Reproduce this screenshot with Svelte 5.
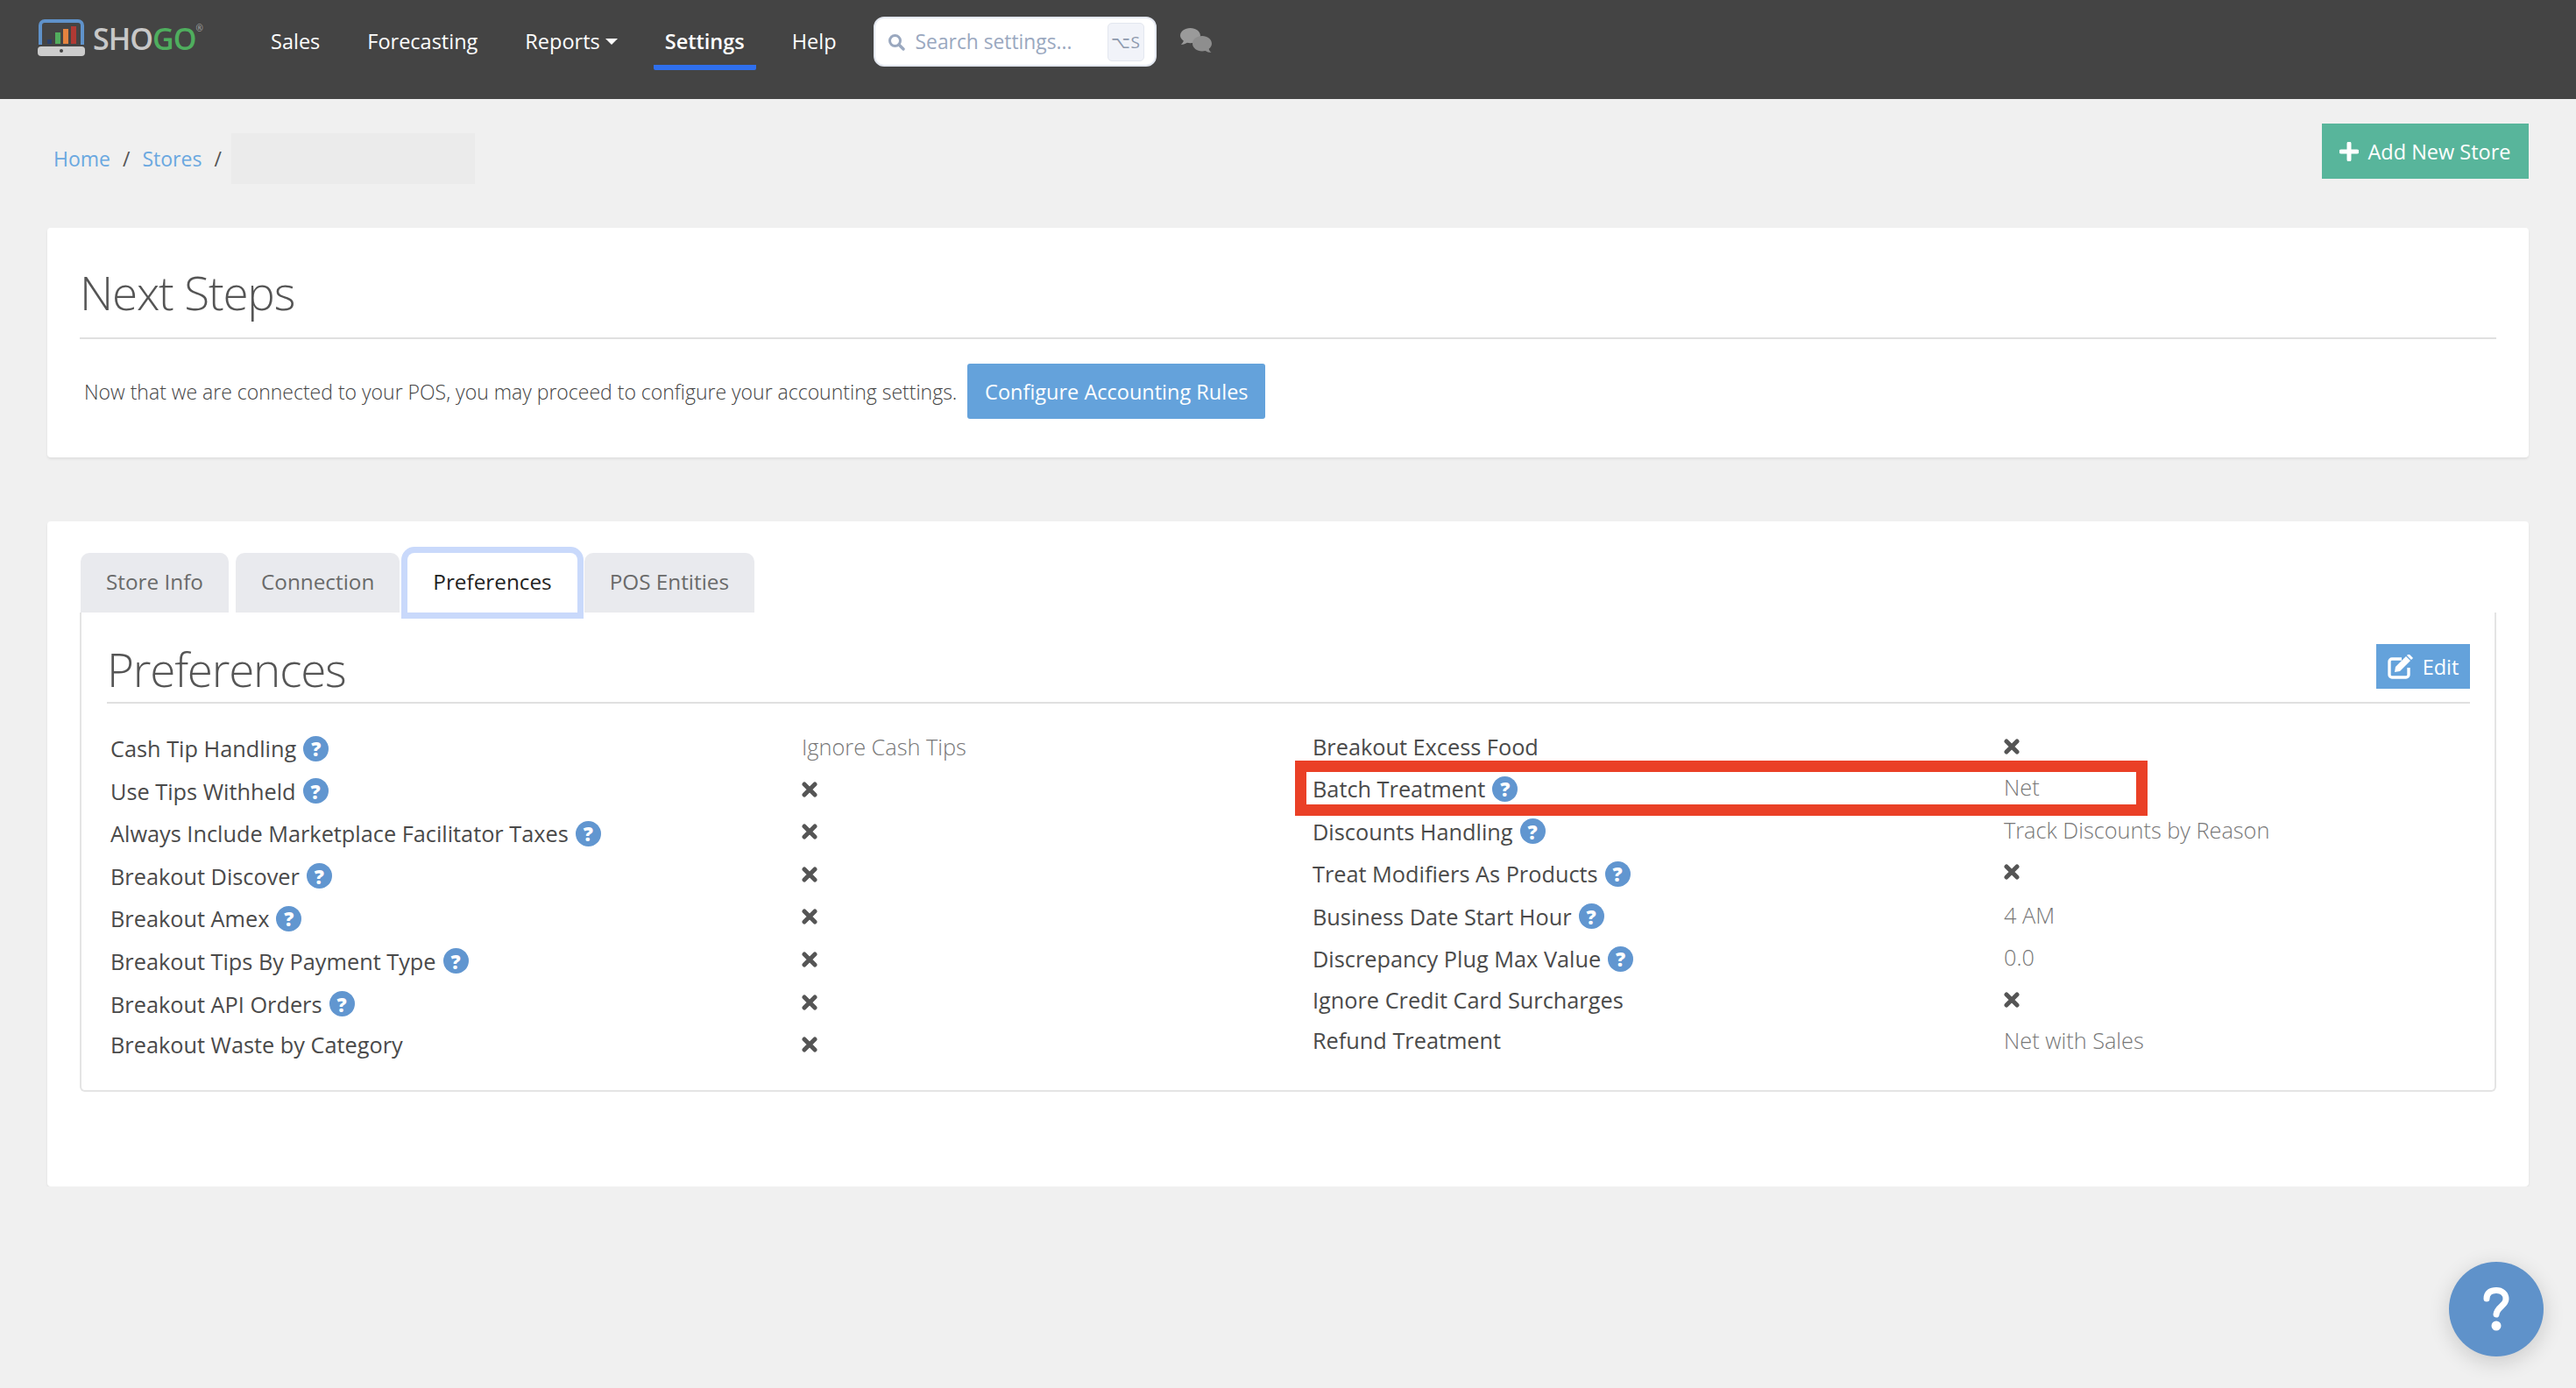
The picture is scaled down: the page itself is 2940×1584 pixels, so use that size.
<script>
  const nav = ['Sales', 'Forecasting', 'Reports', 'Settings', 'Help'];
  const tabs = ['Store Info', 'Connection', 'Preferences', 'POS Entities'];
  const left = [
    { l: 'Cash Tip Handling', h: true, v: 'Ignore Cash Tips' },
    { l: 'Use Tips Withheld', h: true },
    { l: 'Always Include Marketplace Facilitator Taxes', h: true },
    { l: 'Breakout Discover', h: true },
    { l: 'Breakout Amex', h: true },
    { l: 'Breakout Tips By Payment Type', h: true },
    { l: 'Breakout API Orders', h: true },
    { l: 'Breakout Waste by Category' }
  ];
  const right = [
    { l: 'Breakout Excess Food' },
    { l: 'Batch Treatment', h: true, v: 'Net', mark: true },
    { l: 'Discounts Handling', h: true, v: 'Track Discounts by Reason' },
    { l: 'Treat Modifiers As Products', h: true },
    { l: 'Business Date Start Hour', h: true, v: '4 AM' },
    { l: 'Discrepancy Plug Max Value', h: true, v: '0.0' },
    { l: 'Ignore Credit Card Surcharges' },
    { l: 'Refund Treatment', v: 'Net with Sales' }
  ];
  const cols = [left, right];
</script>

<header class="nav">
  <div class="brand">
    <svg class="logo" viewBox="0 0 54 42" width="54" height="42">
      <path d="M3 29V7a5 5 0 0 1 5-5h38a5 5 0 0 1 5 5v22" fill="none" stroke="#5f92ca" stroke-width="4"/>
      <rect x="11" y="23" width="5" height="5" fill="#2a3f6b"/>
      <rect x="20" y="15" width="6" height="13" fill="#52ad5e"/>
      <rect x="29" y="11" width="6" height="17" fill="#e5833f"/>
      <rect x="38" y="8" width="6" height="20" fill="#b03a34"/>
      <rect x="0" y="31" width="54" height="11" rx="4" fill="#cccccc"/>
      <circle cx="27" cy="36" r="2" fill="#444"/>
    </svg>
    <span class="word">SHO<b>GO</b></span><span class="reg">®</span>
  </div>
  <nav class="links">
    {#each nav as n}
      <span class="link" class:active={n === 'Settings'}>{n}{#if n === 'Reports'}<i class="caret"></i>{/if}</span>
    {/each}
  </nav>
  <div class="search">
    <svg viewBox="0 0 20 20" width="20" height="20"><circle cx="8.500" cy="8.500" r="6" fill="none" stroke="#9aa8bf" stroke-width="3"/><path d="M13 13l5 5" stroke="#9aa8bf" stroke-width="3.400" stroke-linecap="round"/></svg>
    <span class="ph">Search settings...</span>
    <span class="kbd">⌥S</span>
  </div>
  <svg class="chat" viewBox="0 0 36 28" width="36" height="28">
    <path d="M14 0c7.700 0 14 4.700 14 10.500S21.700 21 14 21c-1.500 0-3-.2-4.300-.5C7.500 22 4.500 23 1 23c2-1.500 3.200-3.400 3.600-5.300C1.800 15.800 0 13.300 0 10.500 0 4.700 6.300 0 14 0z" fill="#9a9a9a" transform="scale(.82)"/>
    <path d="M25 9c6 0 11 3.900 11 8.700 0 2.400-1.200 4.500-3.300 6.100.3 1.500 1.200 3 2.800 4.200-2.700 0-5-.8-6.800-2-1.200.3-2.400.4-3.700.4-6 0-11-3.900-11-8.700S19 9 25 9z" fill="#8e8e8e"/>
  </svg>
</header>

<main class="page">
  <div class="crumbs">
    <div class="trail">
      <a href="#home">Home</a><span class="sep">/</span><a href="#stores">Stores</a><span class="sep last">/</span><span class="blank"></span>
    </div>
    <button class="btn add"><svg viewBox="0 0 22 22" width="22" height="22"><path d="M11 2v18M2 11h18" stroke="#fff" stroke-width="5" stroke-linecap="round"/></svg>Add New Store</button>
  </div>

  <section class="card first">
    <h2>Next Steps</h2>
    <div class="next">
      <span>Now that we are connected to your POS, you may proceed to configure your accounting settings.</span>
      <button class="btn cfg">Configure Accounting Rules</button>
    </div>
  </section>

  <section class="card second">
    <div class="tabs">
      {#each tabs as t}
        <div class="tab" class:on={t === 'Preferences'}>{t}</div>
      {/each}
    </div>
    <div class="panel">
      <div class="head">
        <h2>Preferences</h2>
        <button class="btn edit">
          <svg viewBox="0 0 30 28" width="30" height="28">
            <path d="M24 15v8a3 3 0 0 1-3 3H5a3 3 0 0 1-3-3V8a3 3 0 0 1 3-3h11" fill="none" stroke="#fff" stroke-width="3.400"/>
            <path d="M8 20l1-6L21 2l5 5-12 12z" fill="#fff"/>
            <path d="M23 0l5 5" stroke="#fff" stroke-width="3"/>
          </svg>Edit</button>
      </div>
      <div class="cols">
        {#each cols as col}
          <div class="col">
            {#each col as r}
              <div class="row" class:tall={r.h}>
                <div class="label">{r.l}{#if r.h}<span class="q">?</span>{/if}</div>
                <div class="val">
                  {#if r.v}{r.v}{:else}<svg viewBox="0 0 18 18" width="18" height="18"><path d="M3 3l12 12M15 3L3 15" stroke="#555" stroke-width="5" stroke-linecap="round"/></svg>{/if}
                </div>
                {#if r.mark}<span class="redbox"></span>{/if}
              </div>
            {/each}
          </div>
        {/each}
      </div>
    </div>
  </section>
</main>

<button class="fab" aria-label="Help">
  <svg viewBox="0 0 30 50" width="30" height="50">
    <path d="M4 13C4 6 9 3.500 15 3.500S26 7 26 13.500C26 21 16 22 15 31" fill="none" stroke="#fff" stroke-width="7" stroke-linecap="round"/>
    <circle cx="15" cy="44" r="5.500" fill="#fff"/>
  </svg>
</button>

<style>
  :global(body) {
    margin: 0;
    background: #f0f0f0;
    font-family: "Open Sans", "Liberation Sans", sans-serif;
    font-size: 25.300px;
    color: #555;
  }
  .nav {
    height: 113px;
    background: #444;
    display: flex;
    align-items: flex-start;
    box-sizing: border-box;
    padding-left: 43px;
  }
  .brand {
    display: flex;
    align-items: flex-start;
    width: 253px;
    padding-top: 22px;
    flex: none;
  }
  .word {
    font-size: 34px;
    line-height: 42px;
    margin-left: 9px;
    letter-spacing: -1px;
    color: #c8c8c8;
    font-weight: 600;
    margin-top: 1px;
  }
  .word b { color: #4fae5e; font-weight: 600; }
  .reg { font-size: 10px; color: #aaa; line-height: 12px; margin-top: 4px; }
  .links { display: flex; gap: 28px; flex: none; }
  .link {
    color: #fff;
    font-size: 23.500px;
    line-height: 34px;
    padding: 30px 13px 10px;
    border-bottom: 6px solid transparent;
    display: block;
    box-sizing: border-box;
    height: 80px;
    white-space: nowrap;
  }
  .link.active { font-weight: 600; border-bottom-color: #2f6fed; border-radius: 0 0 2px 2px; }
  .caret {
    display: inline-block;
    margin-left: 6px;
    vertical-align: 5px;
    border-top: 7px solid #fff;
    border-left: 7px solid transparent;
    border-right: 7px solid transparent;
  }
  .search {
    margin: 19px 0 0 29px;
    width: 323px;
    height: 57px;
    box-sizing: border-box;
    background: #fff;
    border: 2px solid #e4e8f0;
    border-radius: 12px;
    display: flex;
    align-items: center;
    padding: 0 12px 0 14px;
    flex: none;
  }
  .ph { color: #9aa8bf; font-size: 22.800px; margin-left: 12px; flex: 1; white-space: nowrap; }
  .kbd {
    width: 42px;
    height: 44px;
    box-sizing: border-box;
    background: #f1f3f9;
    border: 1px solid #e3e7ef;
    border-radius: 5px;
    color: #8d99ad;
    font-size: 19px;
    display: flex;
    align-items: center;
    justify-content: center;
  }
  .chat { margin: 32px 0 0 27px; flex: none; }
  .page { padding: 0 54px; }
  .crumbs {
    height: 147px;
    display: flex;
    justify-content: space-between;
    align-items: flex-start;
  }
  .trail { display: flex; align-items: center; padding: 39px 0 0 7px; height: 58px; }
  .trail a { color: #6aa8e0; text-decoration: none; font-size: 23px; }
  .sep { margin: 0 14px; color: #555; font-size: 23px; }
  .sep.last { margin-right: 11px; }
  .blank { width: 278px; height: 58px; background: #ebebeb; display: block; }
  .btn {
    border: 0;
    color: #fff;
    font-family: inherit;
    font-size: 23.500px;
    display: flex;
    align-items: center;
    justify-content: center;
    background: #64a2db;
    padding: 0;
  }
  .add { margin-top: 28px; width: 236px; height: 63px; background: #58b59b; gap: 10px; }
  .card {
    background: #fff;
    border-radius: 4px;
    box-shadow: 0 2px 3px rgba(0, 0, 0, 0.07);
  }
  .first { height: 262px; box-sizing: border-box; padding: 0 37px; }
  h2 {
    margin: 0;
    font-weight: 300;
    font-size: 53px;
    color: #555;
    letter-spacing: -1.200px;
  }
  .first h2 {
    height: 125px;
    line-height: 148px;
    border-bottom: 2px solid #e0e0e0;
    box-sizing: content-box;
  }
  .next { display: flex; align-items: flex-start; padding: 28px 0 0 5px; font-size: 23px; }
  .next span { margin-top: 15px; line-height: 34px; font-weight: 300; color: #444; white-space: nowrap; }
  .cfg { width: 340px; height: 63px; margin-left: 12px; border-radius: 3px; }
  .second { margin-top: 73px; height: 759px; box-sizing: border-box; padding: 36px 37px 0; }
  .tabs { display: flex; height: 68px; gap: 8px; padding-left: 1px; }
  .tab {
    background: #e9eaee;
    color: #6a6a6a;
    border-radius: 10px 10px 0 0;
    padding: 0 29px;
    line-height: 66px;
    font-size: 24.300px;
    white-space: nowrap;
  }
  .tab.on {
    background: #fff;
    color: #222;
    font-weight: 500;
    box-shadow: 0 0 0 7px #c9d9fb;
    position: relative;
    margin: 0 0 0 1px;
    border-radius: 8px 8px 0 0;
  }
  .panel {
    border: 2px solid #e4e4e4;
    border-top: 0;
    border-radius: 0 0 6px 6px;
    height: 547px;
    box-sizing: border-box;
    padding: 0 28px 0 29px;
  }
  .head {
    height: 102px;
    border-bottom: 2px solid #e0e0e0;
    display: flex;
    justify-content: space-between;
    align-items: flex-start;
  }
  .head h2 { line-height: 130px; }
  .edit { margin-top: 36px; width: 107px; height: 51px; gap: 10px; }
  .cols { display: grid; grid-template-columns: 1372px 1fr; padding: 27px 0 0 4px; }
  .row { display: flex; height: 46px; position: relative; }
  .row.tall { height: 48.600px; }
  .label {
    width: 789px;
    flex: none;
    display: flex;
    align-items: center;
    height: 44px;
    gap: 8px;
    color: #4a4a4a;
    white-space: nowrap;
  }
  .tall .label { height: 48px; }
  .val {
    color: #777;
    font-weight: 300;
    line-height: 44px;
    height: 44px;
    display: flex;
    align-items: center;
    white-space: nowrap;
  }
  .q {
    width: 29px;
    height: 29px;
    border-radius: 50%;
    background: #6196d0;
    color: #fff;
    font-size: 22px;
    font-weight: 800;
    display: flex;
    align-items: center;
    justify-content: center;
    line-height: 1;
  }
  .redbox {
    position: absolute;
    left: -20px;
    top: -8px;
    width: 973px;
    height: 63px;
    box-sizing: border-box;
    border: 13px solid #ea4026;
    pointer-events: none;
  }
  .fab {
    position: fixed;
    left: 2795px;
    top: 1440px;
    width: 108px;
    height: 108px;
    border: 0;
    border-radius: 50%;
    background: #5f92ca;
    display: flex;
    align-items: center;
    justify-content: center;
    padding: 0;
    box-shadow: 0 6px 24px rgba(0, 0, 0, 0.16);
  }
</style>
